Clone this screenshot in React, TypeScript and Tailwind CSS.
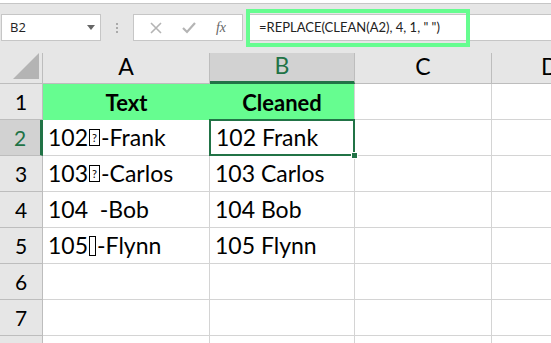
import React from "react";

const font = { fontFamily: "Lato, 'Open Sans', sans-serif" };

const Tofu = ({ q }: { q?: boolean }) =>
  q ? (
    <span className="inline-flex items-center justify-center w-[11px] h-[17px] border border-black text-[11px] leading-none align-[-1px] mx-[1px]">
      ?
    </span>
  ) : (
    <span className="inline-block w-[7px] h-[20px] border border-black align-[-3px] mx-[1px]" />
  );

const rows: { n: string; a: React.ReactNode; b: string }[] = [
  { n: "2", a: <>102<Tofu q />-Frank</>, b: "102 Frank" },
  { n: "3", a: <>103<Tofu q />-Carlos</>, b: "103 Carlos" },
  { n: "4", a: <>104&nbsp;&nbsp;-Bob</>, b: "104 Bob" },
  { n: "5", a: <>105<Tofu />-Flynn</>, b: "105 Flynn" },
  { n: "6", a: "", b: "" },
  { n: "7", a: "", b: "" },
  { n: "", a: "", b: "" },
];

const App: React.FC = () => {
  return (
    <div className="w-[551px] h-[343px] overflow-hidden bg-white text-black" style={font}>
      {/* Toolbar */}
      <div className="h-[50px] bg-[#e6e6e6] border-t border-[#c6c6c6] mt-[3px] relative flex items-start pt-[10px]">
        {/* Name box */}
        <div className="ml-[1px] w-[100px] h-[27px] bg-white border border-[#c6c6c6] flex items-center justify-between pl-[8px] pr-[4px]">
          <span className="text-[13px] text-[#222]" style={{ fontFamily: "'Open Sans', sans-serif" }}>B2</span>
          <svg width="10" height="6" viewBox="0 0 10 6"><path d="M1 0h8L5 5z" fill="#666" /></svg>
        </div>
        <div className="w-[32px] h-[27px] flex flex-col items-center justify-center gap-[2px]">
          <span className="w-[2px] h-[2px] bg-[#aaa]" />
          <span className="w-[2px] h-[2px] bg-[#aaa]" />
          <span className="w-[2px] h-[2px] bg-[#aaa]" />
        </div>
        {/* Buttons */}
        <div className="w-[110px] h-[27px] bg-white border border-[#c6c6c6] flex items-center justify-around px-[6px]">
          <svg width="12" height="12" viewBox="0 0 12 12"><path d="M1 1l10 10M11 1L1 11" stroke="#b4b4b4" strokeWidth="1.6" /></svg>
          <svg width="14" height="12" viewBox="0 0 14 12"><path d="M1 6l4 4 8-9" stroke="#b4b4b4" strokeWidth="2.2" fill="none" /></svg>
          <span className="text-[14px] italic text-[#666]" style={{ fontFamily: "'Liberation Serif', serif" }}>fx</span>
        </div>
        {/* Formula bar */}
        <div className="ml-[3px] flex-1 h-[27px] bg-white border-y border-[#c6c6c6] relative">
          <div className="absolute left-[0px] top-[-6px] w-[224px] h-[38px] border-[4px] border-[#66fd90] flex items-center pl-[9px]">
            <span className="text-[13px] text-[#222] whitespace-pre" style={font}>
              =REPLACE(CLEAN(A2), 4, 1, " ")
            </span>
          </div>
        </div>
      </div>

      {/* Grid */}
      <div className="grid grid-cols-[43px_167px_145px_137px_1fr] grid-rows-[34px_repeat(7,36px)_20px] -mt-[3px]">
        {/* corner */}
        <div className="bg-[#e6e6e6] border-r border-b border-[#bdbdbd] flex items-end justify-end pr-[3px] pb-[4px]">
          <svg width="26" height="26" viewBox="0 0 26 26"><path d="M26 0V26H0z" fill="#b4b4b4" /></svg>
        </div>
        {["A", "B", "C", "D"].map((c) => (
          <div
            key={c}
            className={
              c === "B"
                ? "bg-[#d2d2d2] border-r border-[#bdbdbd] border-b-[3px] border-b-[#217346] text-[#217346] flex items-center justify-center text-[23px]"
                : c === "D"
                ? "bg-[#e6e6e6] border-b border-[#bdbdbd] flex items-center justify-start pl-[49px] text-[23px] overflow-hidden"
                : "bg-[#e6e6e6] border-r border-b border-[#bdbdbd] flex items-center justify-center text-[23px]"
            }
          >
            <span>{c}</span>
          </div>
        ))}

        {/* Row 1 */}
        <div className="bg-[#e6e6e6] border-r border-b border-[#bdbdbd] flex items-center justify-center text-[21px]">1</div>
        <div className="bg-[#66fd90] flex items-center justify-center text-[22px] font-bold">Text</div>
        <div className="bg-[#66fd90] flex items-center justify-center text-[22px] font-bold border-r border-[#d4d4d4]">Cleaned</div>
        <div className="border-r border-b border-[#d4d4d4]" />
        <div className="border-b border-[#d4d4d4]" />

        {rows.map((r, i) => {
          const sel = i === 0;
          return (
            <React.Fragment key={i}>
              <div
                className={
                  sel
                    ? "bg-[#d2d2d2] border-b border-[#bdbdbd] border-r-[3px] border-r-[#217346] text-[#217346] flex items-center justify-center text-[21px]"
                    : "bg-[#e6e6e6] border-r border-b border-[#bdbdbd] flex items-center justify-center text-[21px]"
                }
              >
                {r.n}
              </div>
              <div className="border-r border-b border-[#d4d4d4] flex items-center pl-[5px] text-[23px] whitespace-pre">{r.a}</div>
              <div
                className={
                  sel
                    ? "relative border-2 border-[#217346] -ml-[1px] -mt-[1px] flex items-center pl-[5px] text-[23px]"
                    : "border-r border-b border-[#d4d4d4] flex items-center pl-[5px] text-[23px]"
                }
              >
                {r.b}
                {sel && <span className="absolute right-[-5px] bottom-[-5px] w-[7px] h-[7px] bg-[#217346] border border-white" />}
              </div>
              <div className="border-r border-b border-[#d4d4d4]" />
              <div className="border-b border-[#d4d4d4]" />
            </React.Fragment>
          );
        })}
      </div>
    </div>
  );
};

export default App;
